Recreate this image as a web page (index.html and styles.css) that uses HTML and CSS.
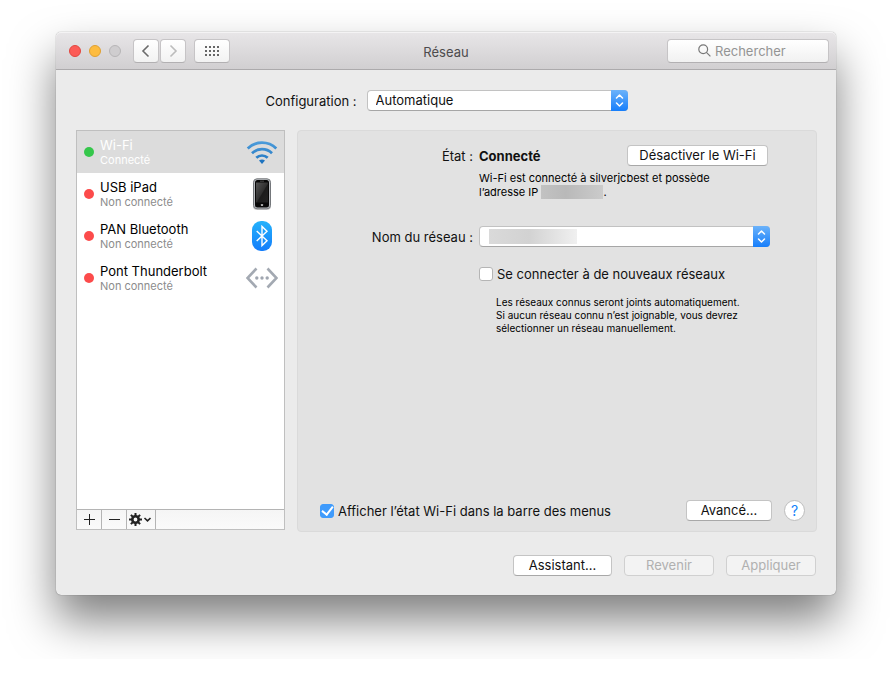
FILE: index.html
```html
<!DOCTYPE html>
<html lang="fr">
<head>
<meta charset="utf-8">
<meta name="viewport" content="width=device-width, initial-scale=1">
<title>Réseau</title>
<link rel="stylesheet" href="styles.css">
</head>
<body>
<div class="window">
  <header class="toolbar">
    <div class="toolbar-start">
      <div class="lights">
        <button class="light light-close" type="button" aria-label="Fermer"></button>
        <button class="light light-minimize" type="button" aria-label="Réduire"></button>
        <button class="light light-zoom" type="button" aria-label="Agrandir" disabled></button>
      </div>
      <div class="nav">
        <button class="tool" type="button" aria-label="Précédent">
          <svg width="12" height="14" viewBox="0 0 12 14" fill="none" stroke="#6b6b6b" stroke-width="1.6"><path d="M8.500 1.500 3 7l5.500 5.500"/></svg>
        </button>
        <button class="tool" type="button" aria-label="Suivant" disabled>
          <svg width="12" height="14" viewBox="0 0 12 14" fill="none" stroke="#bcbcbc" stroke-width="1.600"><path d="M3.500 1.500 9 7l-5.500 5.500"/></svg>
        </button>
      </div>
      <button class="tool tool-grid" type="button" aria-label="Tout afficher">
        <svg width="14" height="10" viewBox="0 0 14 10" fill="#666"><path d="M0 0h2v2H0zM4 0h2v2H4zM8 0h2v2H8zM12 0h2v2h-2zM0 4h2v2H0zM4 4h2v2H4zM8 4h2v2H8zM12 4h2v2h-2zM0 8h2v2H0zM4 8h2v2H4zM8 8h2v2H8zM12 8h2v2h-2z"/></svg>
      </button>
    </div>
    <h1 class="title">Réseau</h1>
    <label class="search">
      <svg width="13" height="13" viewBox="0 0 13 13" fill="none" stroke="#777" stroke-width="1.200"><circle cx="5.200" cy="5.200" r="4.400"/><path d="m8.400 8.400 4 4"/></svg>
      <input class="search-input" type="search" placeholder="Rechercher" aria-label="Rechercher">
    </label>
  </header>

  <main class="body">
    <div class="location">
      <label for="location">Configuration :</label>
      <span class="popup popup-location">
        <select id="location"><option>Automatique</option></select>
        <span class="popup-cap"><svg width="9" height="13" viewBox="0 0 9 13" fill="none" stroke="#fff" stroke-width="1.500" stroke-linecap="round" stroke-linejoin="round"><path d="m1.500 4 3-3 3 3M1.500 9l3 3 3-3"/></svg></span>
      </span>
    </div>

    <div class="columns">
      <section class="sidebar" aria-label="Services">
        <ul class="services">
          <li class="service service-selected">
            <span class="dot dot-on"></span>
            <span class="service-text"><span class="service-name">Wi-Fi</span><span class="service-state">Connecté</span></span>
            <svg class="service-icon" width="32" height="32" viewBox="0 0 32 32" fill="none">
              <defs><linearGradient id="wave" gradientUnits="userSpaceOnUse" x1="0" y1="5" x2="0" y2="27"><stop stop-color="#4d9ddb"/><stop offset="1" stop-color="#1f74c0"/></linearGradient></defs>
              <g stroke="url(#wave)" stroke-width="2.700"><path d="M1.700 12.500a20.500 20.500 0 0 1 28.600 0"/><path d="M6 17.300a14.300 14.300 0 0 1 20 0"/><path d="M10.300 21.800a8.200 8.200 0 0 1 11.400 0"/></g>
              <path d="M13 24.600q3-2.200 6 0L16 28z" fill="#1f74c0"/>
            </svg>
          </li>
          <li class="service">
            <span class="dot dot-off"></span>
            <span class="service-text"><span class="service-name">USB iPad</span><span class="service-state">Non connecté</span></span>
            <svg class="service-icon" width="32" height="32" viewBox="0 0 32 32">
              <defs><linearGradient id="glass" x1="0" y1="0" x2="1" y2="1"><stop stop-color="#555"/><stop offset=".5" stop-color="#303030"/><stop offset=".55" stop-color="#1c1c1c"/><stop offset="1" stop-color="#222"/></linearGradient></defs>
              <rect x="7" y="2" width="18" height="30" rx="4" fill="#ccc"/>
              <rect x="7.500" y=".8" width="17" height="30" rx="3.500" fill="#b9bcc0" stroke="#74777b"/>
              <rect x="9" y="2" width="14" height="27.500" rx="2.500" fill="#080808"/>
              <path d="M10 4.500h12v20H10z" fill="url(#glass)"/>
              <path d="M14 3.200h4" stroke="#555" stroke-width=".8"/>
              <rect x="14.900" y="25.900" width="2.200" height="2.200" rx=".6" fill="#aaa"/>
            </svg>
          </li>
          <li class="service">
            <span class="dot dot-off"></span>
            <span class="service-text"><span class="service-name">PAN Bluetooth</span><span class="service-state">Non connecté</span></span>
            <svg class="service-icon" width="32" height="32" viewBox="0 0 32 32">
              <defs><linearGradient id="blue" x1="0" y1="0" x2="0" y2="1"><stop stop-color="#24b2fb"/><stop offset="1" stop-color="#147dfb"/></linearGradient></defs>
              <rect x="6" y="1" width="20" height="30" rx="9" fill="url(#blue)"/>
              <path d="M10.700 11 21 20.700l-5 4.800v-19l5 4.800L10.700 21" fill="none" stroke="#fff" stroke-width="1.400"/>
            </svg>
          </li>
          <li class="service">
            <span class="dot dot-off"></span>
            <span class="service-text"><span class="service-name">Pont Thunderbolt</span><span class="service-state">Non connecté</span></span>
            <svg class="service-icon" width="32" height="32" viewBox="0 0 32 32">
              <path d="M10.500 6.500 1.500 16l9 9.500M21.500 6.500l9 9.500-9 9.500" fill="none" stroke="#a3a9b2" stroke-width="2.600"/>
              <g fill="#a0a6b0"><circle cx="10.800" cy="16" r="1.700"/><circle cx="16" cy="16" r="1.700"/><circle cx="21.200" cy="16" r="1.700"/></g>
            </svg>
          </li>
        </ul>
        <div class="actions">
          <button class="action" type="button" aria-label="Ajouter"><svg width="11" height="11" viewBox="0 0 11 11" stroke="#222"><path d="M5.500 0v11M0 5.500h11"/></svg></button>
          <button class="action" type="button" aria-label="Supprimer"><svg width="11" height="11" viewBox="0 0 11 11" stroke="#222"><path d="M0 5.500h11"/></svg></button>
          <button class="action action-menu" type="button" aria-label="Options">
            <svg width="24" height="13" viewBox="0 0 24 13" fill="none" stroke="#222">
              <circle cx="6.500" cy="6.500" r="3.200" stroke-width="2.600"/>
              <path stroke-width="2" d="M6.500 0v3M6.500 10v3M0 6.500h3M10 6.500h3M1.900 1.900 4 4M9 9l2.100 2.100M1.900 11.100 4 9M9 4l2.100-2.100"/>
              <path stroke-width="1.600" d="m15.500 5 3 2.800 3-2.800"/>
            </svg>
          </button>
        </div>
      </section>

      <section class="panel" aria-label="Wi-Fi">
        <div class="form">
          <span class="form-label">État :</span>
          <div class="status">
            <strong>Connecté</strong>
            <button class="button button-wifi" type="button">Désactiver le Wi-Fi</button>
          </div>
          <p class="details">Wi-Fi est connecté à silverjcbest et possède<br>l’adresse IP <span class="masked masked-ip"></span>.</p>
          <label class="form-label" for="network">Nom du réseau :</label>
          <span class="popup popup-network">
            <select id="network"><option></option></select>
            <span class="masked masked-network"></span>
            <span class="popup-cap"><svg width="9" height="13" viewBox="0 0 9 13" fill="none" stroke="#fff" stroke-width="1.500" stroke-linecap="round" stroke-linejoin="round"><path d="m1.500 4 3-3 3 3M1.500 9l3 3 3-3"/></svg></span>
          </span>
          <div class="join">
            <label class="check"><input type="checkbox">Se connecter à de nouveaux réseaux</label>
            <p class="hint">Les réseaux connus seront joints automatiquement.<br>Si aucun réseau connu n’est joignable, vous devrez<br>sélectionner un réseau manuellement.</p>
          </div>
        </div>
        <div class="panel-footer">
          <label class="check"><input type="checkbox" checked>Afficher l’état Wi-Fi dans la barre des menus</label>
          <div class="panel-buttons">
            <button class="button button-advanced" type="button">Avancé...</button>
            <button class="help" type="button" aria-label="Aide">?</button>
          </div>
        </div>
      </section>
    </div>

    <footer class="footer">
      <button class="button button-assist" type="button">Assistant...</button>
      <button class="button button-end" type="button" disabled>Revenir</button>
      <button class="button button-end" type="button" disabled>Appliquer</button>
    </footer>
  </main>
</div>
</body>
</html>
```
FILE: styles.css
```css
* { box-sizing: border-box; }

body {
  margin: 0;
  padding: 32px 56px 64px;
  background: #fff;
  color: #111;
  font: 13px/16px Inter, "Liberation Sans", sans-serif;
}

button, input, select { font: inherit; color: inherit; margin: 0; }
h1, p, ul { margin: 0; padding: 0; }
svg { display: block; flex: none; }

.window {
  border-radius: 5px;
  background: #ebebeb;
  box-shadow: 0 0 1px rgba(0, 0, 0, .6), 0 25px 45px rgba(0, 0, 0, .5);
}

/* Title bar */
.toolbar {
  display: grid;
  grid-template-columns: 1fr auto 1fr;
  align-items: center;
  height: 38px;
  padding: 0 7px;
  border-bottom: 1px solid #acaaac;
  border-radius: 5px 5px 0 0;
  background: linear-gradient(#e8e6e8, #d1cfd1);
  box-shadow: inset 0 1px #f4f3f4;
}
.toolbar-start { display: flex; align-items: center; gap: 8px; padding-left: 6px; }
.lights { display: flex; gap: 8px; margin-right: 4px; }
.light { width: 12px; height: 12px; padding: 0; border: 1px solid; border-radius: 50%; }
.light-close { background: #fc5b57; border-color: #e2463f; }
.light-minimize { background: #fdbc40; border-color: #e0a032; }
.light-zoom { background: #cfcdcf; border-color: #b7b5b7; }
.nav { display: flex; gap: 1px; }
.tool {
  display: flex;
  align-items: center;
  justify-content: center;
  width: 26px;
  height: 24px;
  padding: 0;
  border: 1px solid #c6c4c6;
  border-bottom-color: #b2b0b2;
  border-radius: 4px;
  background: linear-gradient(#fff, #f2f2f2);
}
.tool-grid { width: 36px; }
.title { padding-top: 2px; font-size: 13px; font-weight: 400; color: #4d4b4d; }
.search {
  display: flex;
  align-items: center;
  justify-self: end;
  gap: 4px;
  width: 162px;
  height: 24px;
  padding: 0 8px 0 30px;
  border: 1px solid #c6c4c6;
  border-bottom-color: #b2b0b2;
  border-radius: 4px;
  background: linear-gradient(#fff, #f1f1f1);
}
.search-input { flex: 1; min-width: 0; padding: 0; border: 0; outline: 0; background: none; appearance: none; }
.search-input::placeholder { color: #949494; opacity: 1; }

/* Content */
.body { padding: 20px 19px 19px 20px; }
.location { display: flex; align-items: center; justify-content: center; gap: 10px; margin-bottom: 19px; }
.columns { display: flex; gap: 12px; }

.popup { position: relative; display: block; height: 21px; }
.popup select {
  width: 100%;
  height: 21px;
  padding: 0 24px 1px 8px;
  border: 1px solid #c2c2c2;
  border-bottom-color: #a6a6a6;
  border-radius: 4px;
  background: #fff;
  appearance: none;
}
.popup-location { width: 261px; }
.popup-network { width: 291px; }
.popup-cap {
  position: absolute;
  top: 0;
  right: 0;
  display: flex;
  align-items: center;
  justify-content: center;
  width: 17px;
  height: 21px;
  border-radius: 0 4px 4px 0;
  background: linear-gradient(#6cb3fa, #167efb);
  pointer-events: none;
}

/* Service list */
.sidebar {
  display: flex;
  flex-direction: column;
  flex: none;
  width: 209px;
  height: 400px;
  border: 1px solid #bfbfbf;
  background: #fff;
}
.services { flex: 1; list-style: none; }
.service { display: flex; align-items: center; gap: 6px; height: 42px; padding: 0 6px 0 7px; }
.service-selected { background: #dcdcdc; }
.dot { flex: none; width: 10px; height: 10px; border-radius: 50%; }
.dot-on { background: #35c74b; }
.dot-off { background: #fc4b4b; }
.service-text { display: flex; flex-direction: column; flex: 1; }
.service-name { color: #000; line-height: 15px; }
.service-state { font-size: 11px; line-height: 14px; color: #8c8c8c; }
.service-selected .service-name, .service-selected .service-state { color: #fff; }

.actions { display: flex; height: 20px; border-top: 1px solid #b4b4b4; background: linear-gradient(#f5f5f5, #fafafa); }
.action {
  display: flex;
  align-items: center;
  justify-content: center;
  width: 25px;
  padding: 0;
  border: 0;
  border-right: 1px solid #b4b4b4;
  background: none;
}
.action-menu { width: 29px; }

/* Service settings */
.panel {
  display: flex;
  flex: 1;
  flex-direction: column;
  justify-content: space-between;
  min-height: 402px;
  padding: 14px 11px 10px 22px;
  border: 1px solid #dadada;
  border-radius: 4px;
  background: #e2e2e2;
}
.form { display: grid; grid-template-columns: 153px 1fr; column-gap: 6px; align-items: center; }
.form-label { text-align: right; white-space: nowrap; }
.status { display: flex; align-items: center; justify-content: space-between; padding-right: 37px; }
.status strong { font-weight: 700; }
.details { grid-column: 2; margin: 5px 0 27px; font-size: 11px; line-height: 14px; color: #000; }
.masked { display: inline-block; background: linear-gradient(90deg, #c2c2c2, #b9b9b9 40%, #cbcbcb); }
.masked-ip { width: 62px; height: 14px; vertical-align: top; }
.masked-network {
  position: absolute;
  top: 3px;
  left: 10px;
  width: 88px;
  height: 15px;
  background: linear-gradient(90deg, #dadada, #d2d2d2 45%, #f0f0f0);
}
.join { grid-column: 2; padding-top: 19px; }
.check { display: flex; align-items: center; gap: 4px; white-space: nowrap; }
.check input {
  display: flex;
  align-items: center;
  justify-content: center;
  flex: none;
  width: 14px;
  height: 14px;
  border: 1px solid #b5b5b5;
  border-radius: 3px;
  background: #fff;
  appearance: none;
}
.check input:checked { border-color: #3f9bfc; background: #3f9bfc; }
.check input:checked::before {
  content: "";
  flex: none;
  width: 5px;
  height: 9px;
  margin-bottom: 2px;
  border: solid #fff;
  border-width: 0 2px 2px 0;
  transform: rotate(38deg);
}
.hint { margin: 14px 0 0 17px; font-size: 10px; line-height: 13px; color: #000; white-space: nowrap; }
.panel-footer { display: flex; align-items: center; justify-content: space-between; }
.panel-buttons { display: flex; gap: 12px; }

.button {
  height: 21px;
  padding: 0 0 1px;
  border: 1px solid #c4c4c4;
  border-bottom-color: #a8a8a8;
  border-radius: 4px;
  background: #fff;
  line-height: 16px;
  white-space: nowrap;
}
.button:disabled { border-color: #d0d0d0; background: #f3f3f3; color: #b0b0b0; }
.button-wifi { width: 141px; }
.button-advanced { width: 86px; }
.button-assist { width: 99px; }
.button-end { width: 90px; }
.help {
  width: 21px;
  height: 21px;
  padding: 0;
  border: 1px solid #bdbdbd;
  border-radius: 50%;
  background: #fff;
  color: #1482fa;
  font-size: 14px;
}

.footer { display: flex; justify-content: flex-end; gap: 12px; padding: 23px 1px 0 0; }
```
